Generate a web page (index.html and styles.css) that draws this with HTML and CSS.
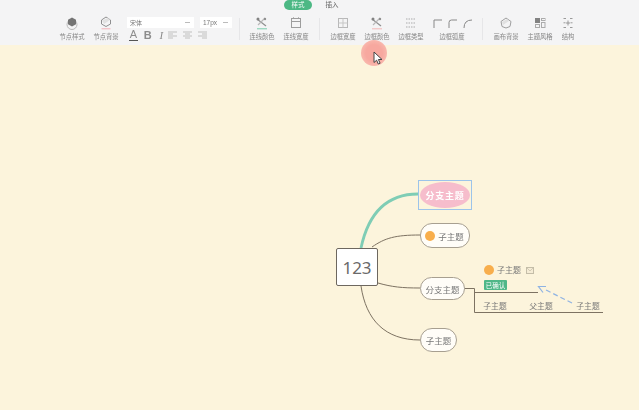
FILE: index.html
```html
<!DOCTYPE html>
<html lang="zh">
<head>
<meta charset="utf-8">
<title>思维导图</title>
<link rel="stylesheet" href="styles.css">
</head>
<body>
<div class="page">
  <header class="toolbar">
    <nav class="tabs">
      <span class="tab active">样式</span>
      <span class="tab">插入</span>
    </nav>
    <div class="tools">
      <div class="tool">
        <svg class="icon" viewBox="0 0 14 14"><circle cx="7" cy="8.500" r="5" fill="none" stroke="#aaa" stroke-width="1"/><path d="M7 1.500l4 2.300v4.400l-4 2.300-4-2.300V3.800z" fill="#555"/></svg>
        <span class="label">节点样式</span>
      </div>
      <div class="tool">
        <svg class="icon" viewBox="0 0 14 14"><path d="M7 1l4.500 3v4L7 10.500 2.500 8V4z" fill="none" stroke="#777"/><path d="M3 4.500l6-2.500 2 2-6 4z" fill="#ddd"/><path d="M2.500 12.800h9" stroke="#f0a0a8"/></svg>
        <span class="label">节点背景</span>
      </div>
      <div class="font-group">
        <div class="selects">
          <div class="select wide"><span>宋体</span><i class="dash"></i></div>
          <div class="select narrow"><span>17px</span><i class="dash"></i></div>
        </div>
        <div class="formats">
          <span class="fmt underline">A</span>
          <span class="fmt bold">B</span>
          <span class="fmt italic">I</span>
          <svg class="align" viewBox="0 0 10 8"><path d="M0 1h9M0 3h5M0 5h9M0 7h5" stroke="#aaa" stroke-width=".7"/></svg>
          <svg class="align" viewBox="0 0 10 8"><path d="M0 1h9M2 3h5M0 5h9M2 7h5" stroke="#aaa" stroke-width=".7"/></svg>
          <svg class="align" viewBox="0 0 10 8"><path d="M0 1h9M4 3h5M0 5h9M4 7h5" stroke="#aaa" stroke-width=".7"/></svg>
        </div>
      </div>
      <i class="divider first"></i>
      <div class="tool">
        <svg class="icon" viewBox="0 0 14 14"><path d="M2 3l9 7" stroke="#777" stroke-width="1.200"/><path d="M10 2L3 9" stroke="#aaa" stroke-width="1.200"/><circle cx="3" cy="3" r="1.500" fill="#666"/><circle cx="10" cy="3" r="1.200" fill="#777"/><path d="M2 12.800h10" stroke="#5cc39a"/></svg>
        <span class="label">连线颜色</span>
      </div>
      <div class="tool">
        <svg class="icon" viewBox="0 0 14 14"><rect x="2.500" y="2.500" width="9" height="9" fill="none" stroke="#888"/><path d="M2.500 5.500h9" stroke="#888"/><path d="M4.500 2v-1M9.500 2v-1" stroke="#aaa"/></svg>
        <span class="label">连线宽度</span>
      </div>
      <i class="divider"></i>
      <div class="tool">
        <svg class="icon" viewBox="0 0 14 14"><rect x="2.500" y="2.500" width="9" height="9" fill="none" stroke="#aaa"/><path d="M7 2.500v9M2.500 7h9" stroke="#bbb"/></svg>
        <span class="label">边框宽度</span>
      </div>
      <div class="tool">
        <svg class="icon" viewBox="0 0 14 14"><path d="M2 3l9 7" stroke="#777" stroke-width="1.200"/><path d="M10 2L3 9" stroke="#aaa" stroke-width="1.200"/><circle cx="3" cy="3" r="1.500" fill="#666"/><circle cx="10" cy="3" r="1.200" fill="#777"/><path d="M2 12.800h10" stroke="#f2a9a9"/></svg>
        <span class="label">边框颜色</span>
      </div>
      <div class="tool">
        <svg class="icon" viewBox="0 0 14 14"><path d="M2 3h10M2 7h10M2 11h10" stroke="#999" stroke-width="1" stroke-dasharray="1.500 1"/></svg>
        <span class="label">边框类型</span>
      </div>
      <div class="tool radius">
        <div class="corners">
          <svg viewBox="0 0 9 9"><path d="M1 9V1h8" fill="none" stroke="#888"/></svg>
          <svg viewBox="0 0 9 9"><path d="M1 9V3.500Q1 1 3.500 1H9" fill="none" stroke="#888"/></svg>
          <svg viewBox="0 0 9 9"><path d="M1 9Q1 1 9 1" fill="none" stroke="#888"/></svg>
        </div>
        <span class="label">边框弧度</span>
      </div>
      <i class="divider"></i>
      <div class="tool">
        <svg class="icon" viewBox="0 0 14 14"><path d="M7 2l5 3.500-1 5L7 12l-4-1.500-1-5z" fill="none" stroke="#888"/><path d="M3 6l5-3 2 2-6 4z" fill="#ddd"/></svg>
        <span class="label">画布背景</span>
      </div>
      <div class="tool">
        <svg class="icon" viewBox="0 0 14 14"><rect x="2" y="2" width="5" height="5" fill="#666"/><rect x="8.500" y="2.500" width="3.500" height="2" fill="none" stroke="#999"/><rect x="2.500" y="8.500" width="4" height="3" fill="none" stroke="#999"/><rect x="8.500" y="6.500" width="3.500" height="5" fill="none" stroke="#999"/></svg>
        <span class="label">主题风格</span>
      </div>
      <div class="tool slim">
        <svg class="icon" viewBox="0 0 14 14"><path d="M2.500 2.500h2.500M9 2.500h2.500M2.500 11.500h2.500M9 11.500h2.500M2.500 6.800h2M9.500 6.800h2M7 4.500v5M5 7h4" stroke="#777" stroke-width=".9"/></svg>
        <span class="label">结构</span>
      </div>
    </div>
  </header>

  <main class="canvas">
    <svg class="links" viewBox="0 0 639 365">
      <g fill="none" stroke="#7d7262" stroke-width="1">
        <path d="M372 202C385 193 395 190 420 190"/>
        <path d="M378 238C392 242 402 243 420 243"/>
        <path d="M361 241C366 275 385 295 420 295"/>
        <path d="M464 243.500H474.500V267.500H603"/>
        <path d="M474.500 247.500H538"/>
      </g>
      <path d="M361 203C368 170 385 149 418 149" fill="none" stroke="#7fcdb5" stroke-width="2.800"/>
      <path d="M572 258L544 244" fill="none" stroke="#8fb3e3" stroke-width="1.200" stroke-dasharray="5 3"/>
      <path d="M543 247.500L538.500 241.500H546" fill="none" stroke="#8fb3e3" stroke-width="1.200"/>
    </svg>

    <div class="node root">123</div>
    <div class="select-box"><div class="node pink">分支主题</div></div>
    <div class="node plain n1"><i class="badge"></i>子主题</div>
    <div class="node plain n2">分支主题</div>
    <div class="node plain n3">子主题</div>

    <div class="leaf-head">
      <i class="badge"></i><span>子主题</span>
      <svg class="mail" viewBox="0 0 8 7"><rect x=".5" y=".5" width="7" height="6" fill="#f5ecd5" stroke="#c4bda8"/><path d="M.5 .5L4 4 7.500 .5" fill="none" stroke="#c4bda8" stroke-width=".7"/></svg>
    </div>
    <span class="tag">已确认</span>
    <span class="leaf l1">子主题</span>
    <span class="leaf l2">父主题</span>
    <span class="leaf l3">子主题</span>

    <i class="click-ring"></i>
    <svg class="cursor" viewBox="0 0 10 14"><path d="M1 1v10.500l2.600-2.300 1.700 3.800 1.800-.8-1.700-3.700H9z" fill="#fff" stroke="#444" stroke-width="1"/></svg>
  </main>
</div>
</body>
</html>
```
FILE: styles.css
```css
* { box-sizing: border-box; }
html, body { margin: 0; height: 100%; }
body {
  font-family: "Noto Sans CJK SC", "Liberation Sans", sans-serif;
  color: #777;
  overflow: hidden;
}
.page {
  width: 639px;
  height: 410px;
  display: flex;
  flex-direction: column;
  filter: blur(.4px);
}

/* toolbar */
.toolbar {
  height: 45px;
  flex: none;
  background: #f4f4f5;
  display: flex;
  flex-direction: column;
}
.tabs {
  height: 10px;
  display: flex;
  padding-left: 284px;
  gap: 6px;
}
.tab {
  width: 28px;
  height: 10px;
  border-radius: 5px;
  font-size: 6.500px;
  line-height: 9px;
  text-align: center;
  color: #666;
}
.tab.active { background: #4cb884; color: #fff; }
.tools {
  display: flex;
  padding-left: 55px;
  padding-top: 6px;
  align-items: flex-start;
}
.tool {
  width: 34px;
  display: flex;
  flex-direction: column;
  align-items: center;
  flex: none;
}
.tool.radius { width: 48px; }
.tool.slim { width: 22px; }
.icon { width: 14px; height: 14px; display: block; opacity: .8; }
.corners {
  display: flex;
  gap: 6px;
  height: 14px;
  align-items: center;
}
.corners svg { width: 9px; height: 9px; }
.label {
  margin-top: 3px;
  font-size: 6.300px;
  line-height: 8px;
  white-space: nowrap;
  color: #858585;
}
.font-group {
  margin-left: 4px;
  width: 105px;
  flex: none;
}
.selects { display: flex; gap: 6px; padding-top: 1px; }
.select {
  height: 11px;
  background: #fff;
  display: flex;
  align-items: center;
  justify-content: space-between;
  padding: 0 4px 0 3px;
  font-size: 6px;
  color: #777;
}
.select.wide { width: 67px; }
.select.narrow { width: 32px; font-family: "Liberation Sans", sans-serif; font-size: 6.500px; }
.dash { width: 5px; height: 1px; background: #bbb; }
.formats {
  display: flex;
  align-items: center;
  height: 14px;
  padding-left: 2px;
}
.fmt {
  width: 13.500px;
  text-align: center;
  font-family: "Liberation Sans", sans-serif;
  font-size: 11px;
  line-height: 12px;
  color: #8c8c8c;
}
.fmt.underline { border-bottom: 1px solid #555; line-height: 11px; width: 9px; margin-right: 3px; }
.fmt.bold { font-weight: bold; }
.fmt.italic { font-style: italic; font-family: "Liberation Serif", serif; }
.align { width: 10px; height: 8px; margin-right: 5px; }
.divider {
  width: 1px;
  height: 22px;
  margin: 2px 6px 0;
  background: #e6e6e8;
  flex: none;
}
.divider.first { margin: 2px 5px 0 7px; }

/* canvas */
.canvas {
  position: relative;
  flex: 1;
  background: #fcf4dc;
}
.links {
  position: absolute;
  inset: 0;
  width: 639px;
  height: 365px;
}
.node {
  position: absolute;
  display: flex;
  align-items: center;
  justify-content: center;
  font-size: 8.500px;
  color: #777;
  white-space: nowrap;
}
.root {
  left: 336px;
  top: 203px;
  width: 42px;
  height: 38px;
  background: #fff;
  border: 1px solid #6d675f;
  border-radius: 2px;
  font-family: "Noto Sans", sans-serif;
  font-size: 17px;
  color: #6a6a6a;
}
.select-box {
  position: absolute;
  left: 418px;
  top: 135px;
  width: 54px;
  height: 30px;
  border: 1px solid #9cc4ea;
}
.pink {
  left: 1px;
  top: 1px;
  width: 50px;
  height: 26px;
  border-radius: 50%;
  background: #f6bdcc;
  color: #fff;
  font-family: "Noto Sans CJK SC", sans-serif;
  font-weight: bold;
  font-size: 9px;
  letter-spacing: .7px;
}
.plain {
  background: #fffdf8;
  border: 1px solid #a79f90;
  border-radius: 12px;
}
.n1 { left: 420px; top: 178px; width: 50px; height: 25px; gap: 3px; padding-right: 1px; }
.n2 { left: 420px; top: 232px; width: 45px; height: 23px; }
.n3 { left: 420px; top: 283px; width: 37px; height: 24px; }
.badge {
  width: 10px;
  height: 10px;
  border-radius: 50%;
  background: #f8ae4c;
  flex: none;
}
.leaf-head {
  position: absolute;
  left: 484px;
  top: 220px;
  display: flex;
  align-items: center;
  gap: 3px;
  font-size: 8px;
  line-height: 10px;
}
.mail { width: 8px; height: 7px; margin-left: 2px; }
.tag {
  position: absolute;
  left: 484px;
  top: 235px;
  width: 23px;
  height: 10px;
  border-radius: 1px;
  background: #4fb788;
  color: #fff;
  font-size: 6.500px;
  line-height: 10px;
  text-align: center;
}
.leaf {
  position: absolute;
  top: 256px;
  width: 24px;
  font-size: 7.800px;
  line-height: 10px;
  text-align: center;
  white-space: nowrap;
}
.l1 { left: 483px; }
.l2 { left: 529px; }
.l3 { left: 576px; }
.click-ring {
  position: absolute;
  left: 361px;
  top: -5px;
  width: 26px;
  height: 26px;
  border-radius: 50%;
  background: radial-gradient(circle, #f7a89f 0 45%, #f9bdb2 80%, #fbd4c6 100%);
}
.cursor {
  position: absolute;
  left: 373px;
  top: 6px;
  width: 10px;
  height: 14px;
}
```
